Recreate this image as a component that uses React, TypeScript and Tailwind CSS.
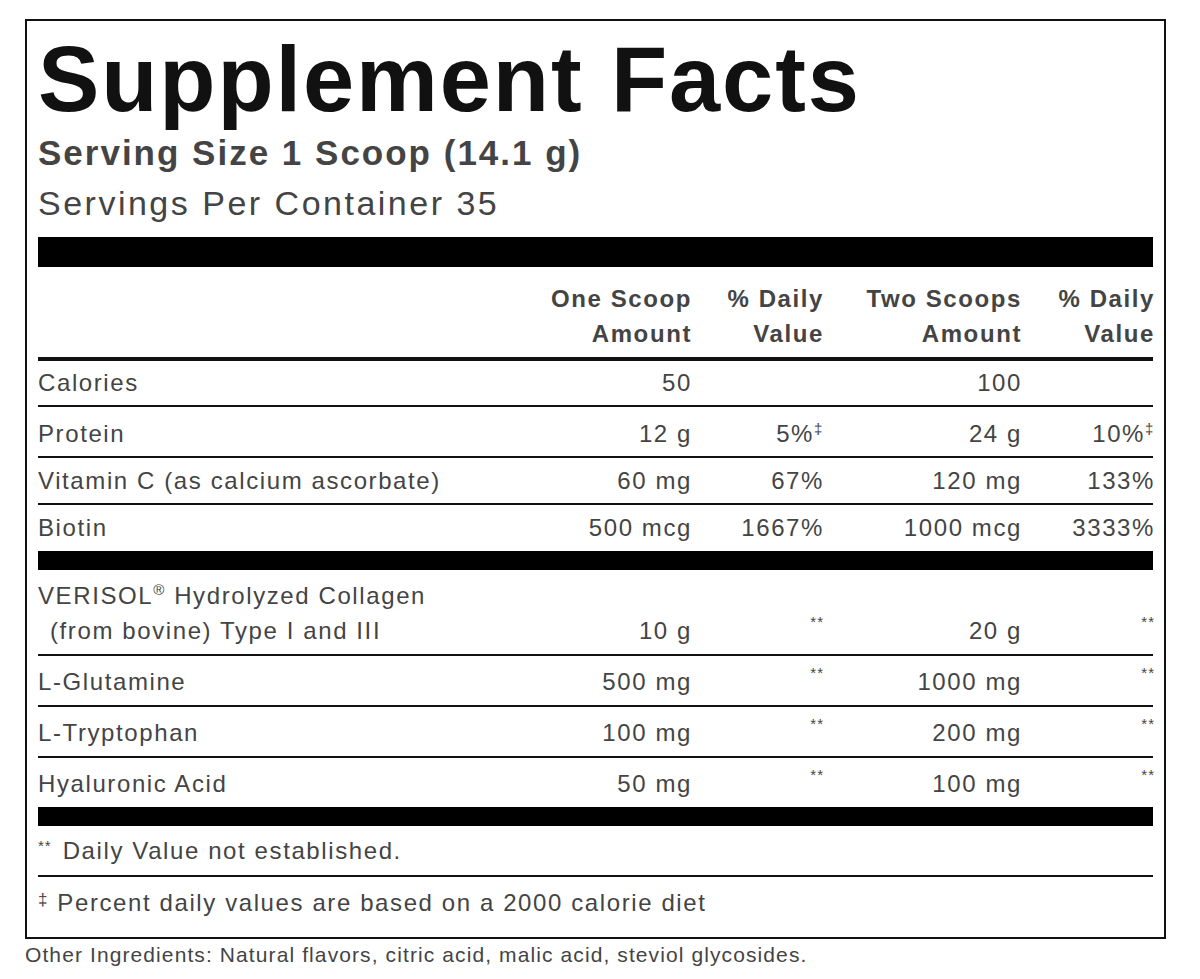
import React from "react"

type Row = {
  label: React.ReactNode
  one: string
  oneDv?: string
  oneSup?: string
  two: string
  twoDv?: string
  twoSup?: string
  pad: string
  lead?: string
  line?: boolean
}

const topRows: Row[] = [
  { label: "Calories", one: "50", two: "100", pad: "pt-[9px] pb-[9px]", line: true },
  { label: "Protein", one: "12 g", oneDv: "5%", oneSup: "‡", two: "24 g", twoDv: "10%", twoSup: "‡", pad: "pt-[14px] pb-[9px]", line: true },
  { label: "Vitamin C (as calcium ascorbate)", one: "60 mg", oneDv: "67%", two: "120 mg", twoDv: "133%", pad: "pt-[10px] pb-[9px]", line: true },
  { label: "Biotin", one: "500 mcg", oneDv: "1667%", two: "1000 mcg", twoDv: "3333%", pad: "pt-[10px] pb-[10px]" },
]

const blendRows: Row[] = [
  {
    label: (
      <>
        <div>
          VERISOL<span className="relative -top-[9px] text-[15px] leading-none">®</span> Hydrolyzed Collagen
        </div>
        <div className="pl-[12px]">(from bovine) Type I and III</div>
      </>
    ),
    one: "10 g",
    oneDv: "",
    oneSup: "**",
    two: "20 g",
    twoDv: "",
    twoSup: "**",
    pad: "pt-[8px] pb-[6px]",
    lead: "leading-[35px]",
    line: true,
  },
  { label: "L-Glutamine", one: "500 mg", oneDv: "", oneSup: "**", two: "1000 mg", twoDv: "", twoSup: "**", pad: "pt-[13px] pb-[10px]", line: true },
  { label: "L-Tryptophan", one: "100 mg", oneDv: "", oneSup: "**", two: "200 mg", twoDv: "", twoSup: "**", pad: "pt-[13px] pb-[10px]", line: true },
  { label: "Hyaluronic Acid", one: "50 mg", oneDv: "", oneSup: "**", two: "100 mg", twoDv: "", twoSup: "**", pad: "pt-[13px] pb-[10px]" },
]

const cols = "grid grid-cols-[492px_160px_132px_198px_133px] items-end"

function Sup({ mark }: { mark?: string }) {
  if (!mark) return null
  if (mark === "**") {
    return <span className="relative -top-[12px] text-[15px] leading-none tracking-[1px]">**</span>
  }
  return <span className="relative -top-[8px] text-[15px] leading-none">{mark}</span>
}

function NutrientRow({ row }: { row: Row }) {
  const lead = row.lead ?? "leading-[26px]"
  return (
    <div className={`${cols} ${row.pad} ${row.line ? "border-b-2 border-[#111]" : ""}`}>
      <div className={lead}>{row.label}</div>
      <div className={`text-right -mr-[2px] ${lead}`}>{row.one}</div>
      <div className={`text-right -mr-[2px] ${lead}`}>
        {row.oneDv}
        <Sup mark={row.oneSup} />
      </div>
      <div className={`text-right -mr-[2px] ${lead}`}>{row.two}</div>
      <div className={`text-right -mr-[2px] ${lead}`}>
        {row.twoDv}
        <Sup mark={row.twoSup} />
      </div>
    </div>
  )
}

export default function App() {
  return (
    <div className="min-h-screen bg-white pt-[19px] pl-[25px] font-['Liberation_Sans',Arial,sans-serif] text-[#444]">
      <div className="w-[1141px] border-2 border-[#111] px-[11px]">
        <h1 className="pt-[12px] text-[92px] font-bold leading-none tracking-[1.9px] text-[#111]">Supplement Facts</h1>
        <p className="mt-[10px] text-[35px] font-bold leading-[36px] tracking-[2px]">Serving Size 1 Scoop (14.1 g)</p>
        <p className="mt-[14px] text-[34px] leading-[36px] tracking-[2.5px]">Servings Per Container 35</p>
        <div className="mt-[16px] h-[30px] bg-black" />

        <div className="text-[24px] tracking-[1.6px]">
          <div className={`${cols} border-b-4 border-[#111] pt-[14px] pb-[6px] font-bold leading-[35px]`}>
            <div />
            <div className="text-right -mr-[2px]">
              One Scoop
              <br />
              Amount
            </div>
            <div className="text-right -mr-[2px]">
              % Daily
              <br />
              Value
            </div>
            <div className="text-right -mr-[2px]">
              Two Scoops
              <br />
              Amount
            </div>
            <div className="text-right -mr-[2px]">
              % Daily
              <br />
              Value
            </div>
          </div>

          {topRows.map((r, i) => (
            <NutrientRow key={i} row={r} />
          ))}
          <div className="h-[19px] bg-black" />

          {blendRows.map((r, i) => (
            <NutrientRow key={i} row={r} />
          ))}
          <div className="h-[19px] bg-black" />

          <div className="border-b-2 border-[#111] pt-[12px] pb-[11px] leading-[26px]">
            <span className="relative -top-[8px] text-[15px] leading-none tracking-[1px]">**</span>
            <span className="ml-[11px]">Daily Value not established.</span>
          </div>
          <div className="pt-[13px] pb-[21px] leading-[26px]">
            <span className="relative -top-[6px] text-[17px] leading-none">‡</span> Percent daily values are based on a 2000 calorie diet
          </div>
        </div>
      </div>
      <p className="mt-[4px] text-[21px] leading-[24px] tracking-[1.1px]">
        Other Ingredients: Natural flavors, citric acid, malic acid, steviol glycosides.
      </p>
    </div>
  )
}
